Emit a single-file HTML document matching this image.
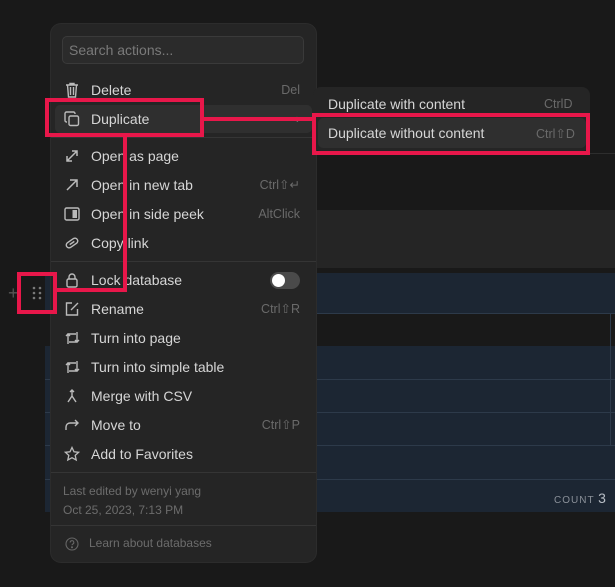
<!DOCTYPE html>
<html><head><meta charset="utf-8"><style>
*{box-sizing:border-box;margin:0;padding:0}
body{width:615px;height:587px;background:#191919;position:relative;overflow:hidden;font-family:"Liberation Sans",sans-serif;color:#d4d4d4}
.a{position:absolute}
.menu{left:51px;top:24px;width:265px;height:538px;background:#252525;border-radius:10px;box-shadow:0 0 0 1px #2c2c2c}
.search{left:62px;top:36px;width:242px;height:28px;border:1px solid #3a3a3a;background:#2b2b2b;border-radius:5px;color:#7a7a7a;font-size:14px;padding:5px 6px}
.it{position:absolute;left:0;width:265px;height:28px;font-size:14px;line-height:28px}
.it .t{position:absolute;left:40px;color:#d6d6d6}
.it .s{position:absolute;right:16px;color:#6a6a6a;font-size:12.5px}
.it svg{position:absolute;left:13px;top:6px}
.sep{position:absolute;left:0;width:265px;height:1px;background:#353535}
.red{position:absolute;background:#e8174a}
.rb{position:absolute;border:4px solid #e8174a}
</style></head><body>
<!-- background table -->
<div class="a" style="left:316px;top:210px;width:299px;height:58px;background:#252525"></div>
<div class="a" style="left:45px;top:273px;width:570px;height:40px;background:#1c2633"></div>
<div class="a" style="left:45px;top:346px;width:570px;height:166px;background:#1c2633"></div>
<div class="a" style="left:45px;top:379px;width:570px;height:1px;background:#2d3a4a"></div>
<div class="a" style="left:45px;top:412px;width:570px;height:1px;background:#2d3a4a"></div>
<div class="a" style="left:45px;top:445px;width:570px;height:1px;background:#2d3a4a"></div>
<div class="a" style="left:45px;top:479px;width:570px;height:1px;background:#2d3a4a"></div>
<div class="a" style="left:45px;top:313px;width:570px;height:1px;background:#2d3a4a"></div>
<div class="a" style="left:610px;top:313px;width:1px;height:132px;background:#2d3a4a"></div>
<div class="a" style="left:590px;top:153px;width:25px;height:1px;background:#2d2d2d"></div>
<div class="a" style="left:554px;top:490px;font-size:10px;letter-spacing:1px;color:#8a9099">COUNT <span style="font-size:14px;color:#b8bec6;letter-spacing:0">3</span></div>
<div class="a" style="left:8px;top:283px;color:#555;font-size:18px">+</div>
<svg class="a" style="left:31px;top:285px" width="12" height="16"><g fill="#7a7a7a"><circle cx="3" cy="3" r="1.3"/><circle cx="9" cy="3" r="1.3"/><circle cx="3" cy="8" r="1.3"/><circle cx="9" cy="8" r="1.3"/><circle cx="3" cy="13" r="1.3"/><circle cx="9" cy="13" r="1.3"/></g></svg>

<div class="a menu">
 <div class="it" style="top:52px"><svg width="16" height="16" fill="none" stroke="#bbb" stroke-width="1.4"><path d="M2 3h12M6 3V1.5h4V3M3.5 3l1 12h7l1-12M6.5 5v8M9.5 5v8"/></svg><span class="t">Delete</span><span class="s">Del</span></div>
 <div class="a" style="left:4px;top:81px;width:257px;height:28px;background:#2f2f2f;border-radius:5px"></div>
 <div class="it" style="top:81px"><svg width="16" height="16" fill="none" stroke="#bbb" stroke-width="1.4"><rect x="5" y="5" width="9.5" height="9.5" rx="1.5"/><path d="M11 3V2.5A1.5 1.5 0 0 0 9.5 1H2.5A1.5 1.5 0 0 0 1 2.5v7A1.5 1.5 0 0 0 2.5 11H3"/></svg><span class="t">Duplicate</span><span class="s" style="color:#777">›</span></div>
 <div class="sep" style="top:113px"></div>
 <div class="it" style="top:118px"><svg width="16" height="16" fill="none" stroke="#bbb" stroke-width="1.5"><path d="M3 13L13 3M8 3h5v5M3 8v5h5"/></svg><span class="t">Open as page</span></div>
 <div class="it" style="top:147px"><svg width="16" height="16" fill="none" stroke="#bbb" stroke-width="1.5"><path d="M3 13L13 3M6 3h7v7"/></svg><span class="t">Open in new tab</span><span class="s">Ctrl⇧↵</span></div>
 <div class="it" style="top:176px"><svg width="16" height="16" fill="none" stroke="#bbb" stroke-width="1.4"><rect x="1" y="2" width="14" height="12" rx="1.5"/><rect x="8.5" y="4" width="4.5" height="8" fill="#bbb" stroke="none"/></svg><span class="t">Open in side peek</span><span class="s">AltClick</span></div>
 <div class="it" style="top:205px"><svg width="16" height="16" fill="none" stroke="#bbb" stroke-width="1.4"><path d="M6 10l4-4M6.5 5.5L3.5 8.5a2.8 2.8 0 0 0 4 4l3-3M9.5 10.5l3-3a2.8 2.8 0 0 0-4-4l-3 3" transform="rotate(10 8 8)"/></svg><span class="t">Copy link</span></div>
 <div class="sep" style="top:237px"></div>
 <div class="it" style="top:242px"><svg width="16" height="16" fill="none" stroke="#bbb" stroke-width="1.4"><rect x="3" y="7" width="10" height="8" rx="1.5"/><path d="M5 7V5a3 3 0 0 1 6 0v2"/></svg><span class="t">Lock database</span>
  <div class="a" style="left:219px;top:6px;width:30px;height:17px;border-radius:9px;background:#4a4a4a"><div class="a" style="left:2px;top:2px;width:13px;height:13px;border-radius:50%;background:#fff"></div></div></div>
 <div class="it" style="top:271px"><svg width="16" height="16" fill="none" stroke="#bbb" stroke-width="1.4"><path d="M8 2H2.5v12h11V8M7 9l7-7"/></svg><span class="t">Rename</span><span class="s">Ctrl⇧R</span></div>
 <div class="it" style="top:300px"><svg width="17" height="16" fill="none" stroke="#bbb" stroke-width="1.4"><path d="M4 14V4h8M2 6l2-2 2 2M13 2v10H5M11 10l2 2 2-2"/></svg><span class="t">Turn into page</span></div>
 <div class="it" style="top:329px"><svg width="17" height="16" fill="none" stroke="#bbb" stroke-width="1.4"><path d="M4 14V4h8M2 6l2-2 2 2M13 2v10H5M11 10l2 2 2-2"/></svg><span class="t">Turn into simple table</span></div>
 <div class="it" style="top:358px"><svg width="16" height="16" fill="none" stroke="#bbb" stroke-width="1.4"><path d="M8 2v6L4 14M8 8l4 6M6 4l2-2 2 2"/></svg><span class="t">Merge with CSV</span></div>
 <div class="it" style="top:387px"><svg width="16" height="16" fill="none" stroke="#bbb" stroke-width="1.4"><path d="M2 13V10a4 4 0 0 1 4-4h8M11 3l3 3-3 3"/></svg><span class="t">Move to</span><span class="s">Ctrl⇧P</span></div>
 <div class="it" style="top:416px"><svg width="16" height="16" fill="none" stroke="#bbb" stroke-width="1.3"><path d="M8 1.5l2 4.3 4.6.5-3.4 3.1 1 4.6L8 11.7 3.8 14l1-4.6L1.4 6.3 6 5.8z"/></svg><span class="t">Add to Favorites</span></div>
 <div class="sep" style="top:448px"></div>
 <div class="a" style="left:12px;top:458px;font-size:12px;color:#6c6c6c;line-height:19px">Last edited by wenyi yang<br>Oct 25, 2023, 7:13 PM</div>
 <div class="sep" style="top:501px"></div>
 <svg class="a" style="left:14px;top:513px" width="14" height="14" fill="none" stroke="#666" stroke-width="1.1"><circle cx="7" cy="7" r="6"/><path d="M5.2 5.5a1.8 1.8 0 1 1 2.5 1.6c-.5.3-.7.6-.7 1.2"/><circle cx="7" cy="10.3" r=".5" fill="#666"/></svg>
 <div class="a" style="left:38px;top:512px;font-size:12px;color:#6c6c6c">Learn about databases</div>
</div>
<div class="a search">Search actions...</div>

<!-- submenu -->
<div class="a" style="left:313px;top:87px;width:277px;height:64px;background:#252525;border-radius:8px"></div>
<div class="a" style="left:318px;top:118px;width:268px;height:30px;background:#2f2f2f;border-radius:5px"></div>
<div class="a" style="left:328px;top:96px;font-size:14px;color:#d6d6d6">Duplicate with content</div>
<div class="a" style="left:544px;top:97px;font-size:12.5px;color:#6a6a6a">CtrlD</div>
<div class="a" style="left:328px;top:125px;font-size:14px;color:#d6d6d6">Duplicate without content</div>
<div class="a" style="left:536px;top:126px;font-size:12.5px;color:#6a6a6a">Ctrl⇧D</div>

<!-- red annotations -->
<div class="rb" style="left:45px;top:98px;width:159px;height:39px"></div>
<div class="red" style="left:203px;top:117px;width:111px;height:4px"></div>
<div class="rb" style="left:312px;top:113px;width:278px;height:42px"></div>
<div class="red" style="left:123px;top:136px;width:4px;height:156px"></div>
<div class="red" style="left:55px;top:288px;width:72px;height:4px"></div>
<div class="rb" style="left:17px;top:272px;width:40px;height:42px"></div>
</body></html>
